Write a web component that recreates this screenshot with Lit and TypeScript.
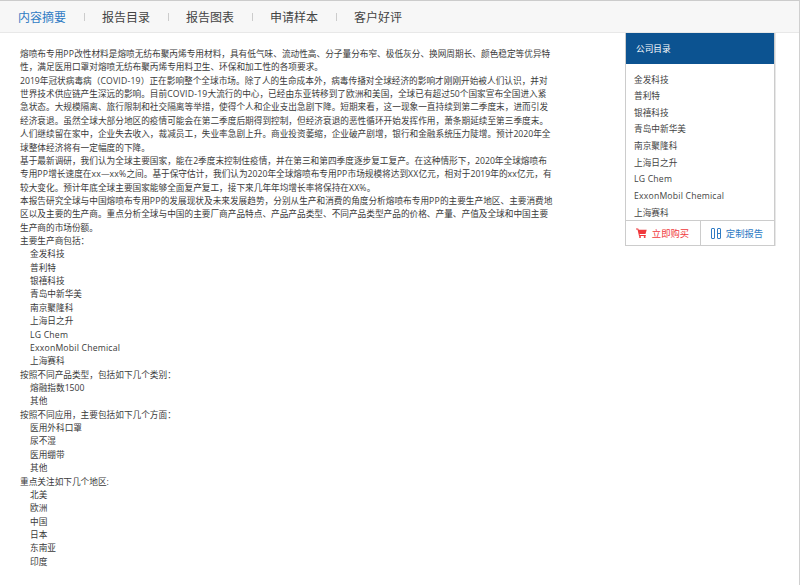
import { LitElement, html, css } from "lit";
import { customElement } from "lit/decorators.js";

const TABS = ["内容摘要", "报告目录", "报告图表", "申请样本", "客户好评"];
const COMPANIES = ["金发科技", "普利特", "银禧科技", "青岛中新华美", "南京聚隆科", "上海日之升", "LG Chem", "ExxonMobil Chemical", "上海赛科"];
type L = [string, number?];
const LINES: L[] = [
  ["熔喷布专用PP改性材料是熔喷无纺布聚丙烯专用材料，具有低气味、流动性高、分子量分布窄、极低灰分、换网周期长、颜色稳定等优异特"],
  ["性，满足医用口罩对熔喷无纺布聚丙烯专用料卫生、环保和加工性的各项要求。"],
  ["2019年冠状病毒病（COVID-19）正在影响整个全球市场。除了人的生命成本外，病毒传播对全球经济的影响才刚刚开始被人们认识，并对"],
  ["世界技术供应链产生深远的影响。目前COVID-19大流行的中心，已经由东亚转移到了欧洲和美国，全球已有超过50个国家宣布全国进入紧"],
  ["急状态。大规模隔离、旅行限制和社交隔离等举措，使得个人和企业支出急剧下降。短期来看，这一现象一直持续到第二季度末，进而引发"],
  ["经济衰退。虽然全球大部分地区的疫情可能会在第二季度后期得到控制，但经济衰退的恶性循环开始发挥作用，萧条期延续至第三季度末。"],
  ["人们继续留在家中，企业失去收入，裁减员工，失业率急剧上升。商业投资萎缩，企业破产剧增，银行和金融系统压力陡增。预计2020年全"],
  ["球整体经济将有一定幅度的下降。"],
  ["基于最新调研，我们认为全球主要国家，能在2季度末控制住疫情，并在第三和第四季度逐步复工复产。在这种情形下，2020年全球熔喷布"],
  ["专用PP增长速度在xx—xx%之间。基于保守估计，我们认为2020年全球熔喷布专用PP市场规模将达到XX亿元，相对于2019年的xx亿元，有"],
  ["较大变化。预计年底全球主要国家能够全面复产复工，接下来几年年均增长率将保持在XX%。"],
  ["本报告研究全球与中国熔喷布专用PP的发展现状及未来发展趋势，分别从生产和消费的角度分析熔喷布专用PP的主要生产地区、主要消费地"],
  ["区以及主要的生产商。重点分析全球与中国的主要厂商产品特点、产品产品类型、不同产品类型产品的价格、产量、产值及全球和中国主要"],
  ["生产商的市场份额。"],
  ["主要生产商包括："],
  ...COMPANIES.map((c): L => [c, 1]),
  ["按照不同产品类型，包括如下几个类别："],
  ["熔融指数1500", 1],
  ["其他", 1],
  ["按照不同应用，主要包括如下几个方面："],
  ["医用外科口罩", 1],
  ["尿不湿", 1],
  ["医用绷带", 1],
  ["其他", 1],
  ["重点关注如下几个地区:"],
  ["北美", 1],
  ["欧洲", 1],
  ["中国", 1],
  ["日本", 1],
  ["东南亚", 1],
  ["印度", 1],
];

const latin = (t: string) =>
  t.split(/([A-Za-z][A-Za-z0-9 %-]*)/).map((part, i) => (i % 2 ? html`<span class="lat">${part}</span>` : part));

@customElement("app-root")
export class AppRoot extends LitElement {
  static styles = css`
    :host {
      display: block;
      width: 800px;
      height: 585px;
      box-sizing: border-box;
      border-top: 1px solid #ccc;
      border-right: 1px solid #d0d0d0;
      background: #fff;
      font-family: "Open Sans", "Noto Sans CJK SC", sans-serif;
      color: #333;
      overflow: hidden;
    }
    .nav {
      display: flex;
      align-items: center;
      height: 31px;
      background: #f7f7f7;
      border-bottom: 1px solid #e8e8e8;
      padding-left: 18px;
      font-size: 12px;
      color: #444;
    }
    .tab {
      width: 48px;
      white-space: nowrap;
    }
    .tab.on { color: #2f7bc4; }
    .sep {
      width: 1px;
      height: 8px;
      background: #ccc;
      margin: 0 17px 0 18px;
    }
    .main {
      display: flex;
      align-items: flex-start;
    }
    .text {
      width: 606px;
      margin-left: 20px;
      padding-top: 15px;
      font-size: 8.67px;
      line-height: 13.37px;
      color: #3a3a3a;
    }
    .line { white-space: nowrap; height: 13.37px; }
    .line.in { padding-left: 10px; }
    .lat { letter-spacing: 0.2px; }
    .side {
      width: 150px;
      box-sizing: border-box;
      margin-left: -1px;
      border: 1px solid #ccc;
      border-top: 0;
      box-shadow: 1px 0 0 #e8e8e8;
    }
    .head {
      height: 31px;
      display: flex;
      align-items: center;
      padding-left: 10px;
      background: #0c5391;
      color: #fff;
      font-size: 8.67px;
    }
    .list {
      padding: 7.5px 0 0 8px;
      height: 156px;
      box-sizing: border-box;
      font-size: 8.67px;
      line-height: 16.65px;
      color: #444;
      white-space: nowrap;
      overflow: hidden;
    }
    .btns {
      display: flex;
      height: 24px;
      border-top: 1px solid #ccc;
      font-size: 9.33px;
    }
    .btn {
      flex: 1;
      display: flex;
      align-items: center;
      justify-content: center;
      gap: 4.5px;
    }
    .btn + .btn { border-left: 1px solid #ccc; }
    .buy { color: #f0383c; }
    .custom { color: #2f7bc4; }
    svg { display: block; }
  `;

  render() {
    return html`
      <div class="nav">
        ${TABS.map((t, i) => html`
          ${i ? html`<span class="sep"></span>` : ""}
          <span class="tab ${i === 0 ? "on" : ""}">${t}</span>
        `)}
      </div>
      <div class="main">
        <div class="text">
          ${LINES.map(([t, ind]) => html`<div class="line ${ind ? "in" : ""}">${latin(t)}</div>`)}
        </div>
        <div class="side">
          <div class="head">公司目录</div>
          <div class="list">${COMPANIES.map((c) => html`<div>${latin(c)}</div>`)}</div>
          <div class="btns">
            <div class="btn buy">
              <svg width="11" height="10" viewBox="0 0 11 10" fill="#f0383c">
                <path d="M0 0.5h2.2l.5 1.2h8l-1.2 4.2H3.6l.2 1h6v1H3L1.5 1.5H0z"/>
                <circle cx="4" cy="9" r="1"/><circle cx="8.7" cy="9" r="1"/>
              </svg>
              <span>立即购买</span>
            </div>
            <div class="btn custom">
              <svg width="10" height="11" viewBox="0 0 10 11" fill="none" stroke="#2f7bc4" stroke-width="1">
                <rect x="0.5" y="0.5" width="3" height="10" rx="0.5"/>
                <rect x="6.5" y="0.5" width="3" height="10" rx="0.5"/>
                <path d="M6.5 5.5h3"/>
              </svg>
              <span>定制报告</span>
            </div>
          </div>
        </div>
      </div>
    `;
  }
}
